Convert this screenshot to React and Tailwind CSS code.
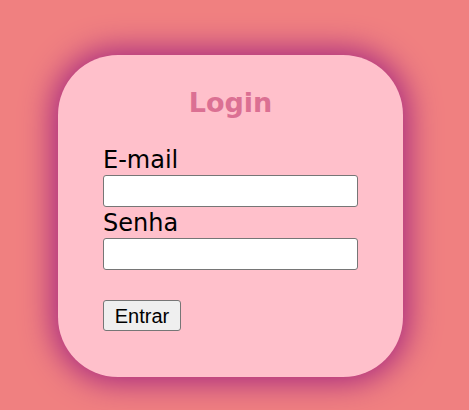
export default function App() {
  return (
    <div className="min-h-[410px] bg-[#F08080] pt-[55px] pl-[58px]">
      <div className="h-[322px] w-[345px] rounded-[60px] bg-[#FFC0CB] px-[45px] pt-[32px] shadow-[0_0_30px_6px_#A82A80]">
        <h2 className="text-center font-['DejaVu_Sans',sans-serif] text-[27px] font-bold leading-[31px] text-[#DB7093]">
          Login
        </h2>
        <form className="mt-[28px] font-['DejaVu_Sans',sans-serif] text-[24px] leading-[28px] text-black">
          <label className="block">E-mail</label>
          <input
            type="email"
            className="mt-[1px] block h-[32px] w-[255px] rounded-[3px] border border-[#767676] bg-white"
          />
          <label className="mt-[2px] block">Senha</label>
          <input
            type="password"
            className="mt-[1px] block h-[32px] w-[255px] rounded-[3px] border border-[#767676] bg-white"
          />
          <button
            type="button"
            className="mt-[30px] flex h-[31px] w-[78px] items-center justify-center rounded-[3px] border border-[#767676] bg-[#EFEFEF] font-['Liberation_Sans',Arial,sans-serif] text-[20px] leading-none text-black"
          >
            Entrar
          </button>
        </form>
      </div>
    </div>
  );
}
